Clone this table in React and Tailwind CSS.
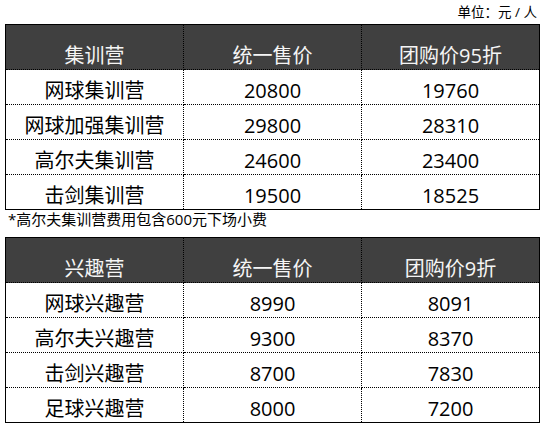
import React from "react";

const font = { fontFamily: '"Open Sans","Noto Sans CJK SC",sans-serif' };

function Table({ head, rows }) {
  return (
    <div className="ml-[5px] w-[535px] border border-black">
      <div className="grid grid-cols-[178px_178px_1fr] bg-[#404040] text-[#f5f5f5] text-[20px] leading-[28px]">
        {head.map((h, i) => (
          <div
            key={i}
            className={`h-[45px] flex items-center justify-center pt-[17px] border-b border-dotted border-black ${i < 2 ? "border-r" : ""}`}
          >
            {h}
          </div>
        ))}
      </div>
      {rows.map((r, ri) => (
        <div key={ri} className="grid grid-cols-[178px_178px_1fr] text-[20px] leading-[28px] text-black">
          {r.map((c, ci) => (
            <div
              key={ci}
              className={`flex items-center justify-center pt-[7px] border-dotted border-black ${ri < rows.length - 1 ? "h-[35px] border-b" : "h-[34px]"} ${ci < 2 ? "border-r" : ""}`}
            >
              {c}
            </div>
          ))}
        </div>
      ))}
    </div>
  );
}

export default function App() {
  return (
    <div className="w-[544px] h-[428px] bg-white overflow-hidden" style={font}>
      <div className="h-[24px] flex items-center justify-end pr-[7px] text-[13.5px] text-black">
        单位：元 / 人
      </div>
      <Table
        head={["集训营", "统一售价", "团购价95折"]}
        rows={[
          ["网球集训营", "20800", "19760"],
          ["网球加强集训营", "29800", "28310"],
          ["高尔夫集训营", "24600", "23400"],
          ["击剑集训营", "19500", "18525"],
        ]}
      />
      <div className="h-[27px] pl-[8px] text-[15px] leading-[19px] text-black">
        *高尔夫集训营费用包含600元下场小费
      </div>
      <Table
        head={["兴趣营", "统一售价", "团购价9折"]}
        rows={[
          ["网球兴趣营", "8990", "8091"],
          ["高尔夫兴趣营", "9300", "8370"],
          ["击剑兴趣营", "8700", "7830"],
          ["足球兴趣营", "8000", "7200"],
        ]}
      />
    </div>
  );
}
